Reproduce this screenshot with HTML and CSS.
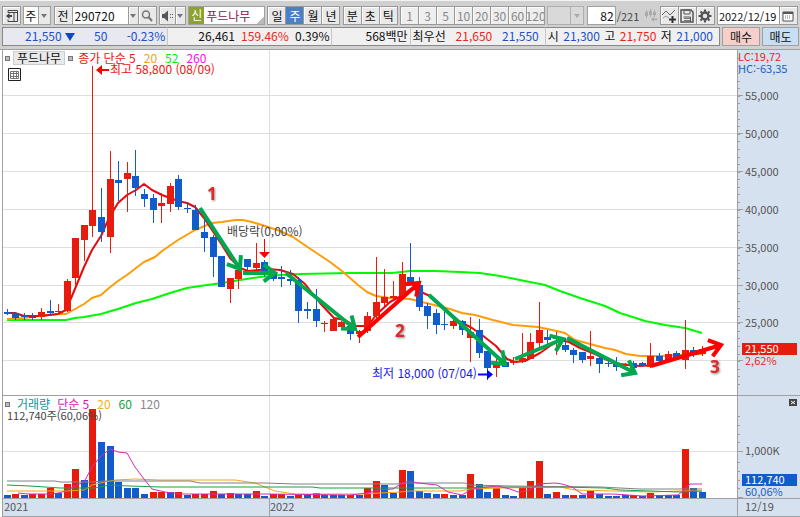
FILE: index.html
```html
<!DOCTYPE html>
<html lang="ko">

<head>
	<meta charset="utf-8">
	<title>푸드나무 주봉 차트</title>
	<meta name="viewport" content="width=device-width, initial-scale=1">
	<link rel="stylesheet" href="styles.css">
</head>

<body>
	<header class="toolbar">
		<button class="btn" aria-label="패널">
			<svg width="14" height="14" viewBox="0 0 14 14"><path d="M3 3.500V1.500h9.500v11H3V10.500M3 3.500h9.500M9 3.500v9" fill="none" stroke="#444" /><path d="M1 7l3.500-3v2H7v2H4.500v2z" fill="#444" /></svg>
		</button>
		<div class="drop drop--period">
			<select aria-label="주기"><option>주</option></select>
			<span class="arrow"></span>
		</div>
		<div class="group">
			<button class="btn">전</button>
			<input class="field field--code" aria-label="종목코드" value="290720">
			<button class="btn btn--thin" aria-label="종목 목록"><span class="caret"></span></button>
			<button class="btn" aria-label="검색">
				<svg width="14" height="14" viewBox="0 0 14 14"><circle cx="6" cy="5.500" r="3.500" fill="none" stroke="#777" stroke-width="1.500" /><path d="M8.500 8l3.500 4" stroke="#777" stroke-width="2" /></svg>
			</button>
		</div>
		<div class="group">
			<button class="btn btn--sound" aria-label="소리">
				<svg width="13" height="12" viewBox="0 0 13 12"><path d="M1 4h2l4-3.500v11L3 8H1z" fill="#555" /><path d="M9 4h1v1H9zM9 7h1v1H9zM11 4h1v1h-1zM11 7h1v1h-1z" fill="#555" /></svg>
			</button>
			<button class="btn btn--thin" aria-label="소리 설정"><span class="caret"></span></button>
		</div>
		<div class="name">
			<span class="name__badge">신</span>
			<input class="name__field" aria-label="종목명" value="푸드나무">
		</div>
		<div class="group">
			<button class="btn">일</button>
			<button class="btn is-active">주</button>
			<button class="btn">월</button>
			<button class="btn">년</button>
		</div>
		<div class="group">
			<button class="btn">분</button>
			<button class="btn">초</button>
			<button class="btn">틱</button>
		</div>
		<div class="group group--off">
			<button class="btn">1</button>
			<button class="btn">3</button>
			<button class="btn">5</button>
			<button class="btn">10</button>
			<button class="btn">20</button>
			<button class="btn">30</button>
			<button class="btn">60</button>
			<button class="btn">120</button>
		</div>
		<div class="drop drop--off">
			<select aria-label="분 단위" disabled><option></option></select>
			<span class="arrow"></span>
		</div>
		<label class="count"><input class="field field--count" aria-label="봉 개수" value="82">/221</label>
		<div class="group group--tools">
			<button class="btn btn--flat" aria-label="봉 추가">
				<svg width="14" height="14" viewBox="0 0 14 14"><path d="M2.500 1v8M6.500 0v8M10.500 1v7" stroke="#aaa" /><path d="M1 3h3v4H1zM5 2h3v4H5zM9 3h3v3H9zM7 10l3-2v1.500h3v1.500h-3V13z" fill="#aaa" /></svg>
			</button>
			<button class="btn" aria-label="지표 추가">
				<svg width="14" height="14" viewBox="0 0 14 14"><path d="M0 6l4-4 4 4 5-5" fill="none" stroke="#666" /><path d="M1 9l3-2 3 2" fill="none" stroke="#999" /><path d="M10.500 7v7M7 10.500h7" stroke="#333" stroke-width="2" /></svg>
			</button>
			<button class="btn" aria-label="저장">
				<svg width="14" height="14" viewBox="0 0 14 14"><path d="M1 1h10l2 2v10H1z" fill="none" stroke="#555" stroke-width="1.500" /><path d="M4 1h6v4H4zM3.500 8h7v5" fill="none" stroke="#555" /><path d="M4 9.500h6M4 11.500h6" stroke="#777" /></svg>
			</button>
			<button class="btn" aria-label="설정">
				<svg width="14" height="14" viewBox="0 0 14 14"><circle cx="7" cy="7" r="3.500" fill="none" stroke="#555" stroke-width="2.500" /><path d="M7 .5v2.500M7 11v2.500M.5 7H3M11 7h2.500M2.500 2.500L4 4M10 10l1.500 1.500M11.500 2.500L10 4M4 10l-1.500 1.500" stroke="#555" stroke-width="2" /></svg>
			</button>
		</div>
		<div class="group">
			<input class="field field--date" aria-label="날짜" value="2022/12/19">
			<button class="btn" aria-label="달력">
				<svg width="12" height="12" viewBox="0 0 12 12"><path d="M1 2h10v9H1z" fill="#fff" stroke="#555" /><path d="M1 3h10" stroke="#555" stroke-width="2" /><path d="M3 6h1m1 0h1m1 0h1M3 8h1m1 0h1m1 0h1" stroke="#777" /></svg>
			</button>
		</div>
	</header>

	<section class="quote">
		<div class="cell cell--price blue"><b>21,550<i class="down"></i></b><b>50</b><b>-0.23%</b></div>
		<div class="cell cell--vol"><b>26,461</b><b class="red">159.46%</b><b>0.39%</b></div>
		<div class="cell cell--amount"><b>568백만</b></div>
		<div class="cell cell--best"><b>최우선</b><b class="red">21,650</b><b class="blue">21,550</b></div>
		<div class="cell cell--range"><b>시</b><b class="blue">21,300</b><b>고</b><b class="red">21,750</b><b>저</b><b class="blue">21,000</b></div>
		<button class="trade trade--buy">매수</button>
		<button class="trade trade--sell">매도</button>
	</section>

	<main class="chart">
		<svg class="chart__svg" viewBox="0 0 800 468">
			<rect class="axis-bg" x="738" y="0" width="62" height="468" />
			<rect class="axis-bg" x="2" y="450" width="736" height="18" />
			<g id="grid"></g>
			<g id="volume"></g>
			<g id="price"></g>
			<g id="marks"></g>
			<g class="frame">
				<path d="M0 .5H800M2.500 0V468M737.500 0V468M2 346.500H800M2 449.500H800M2 467.500H800M269.500 450V467" />
			</g>
			<g class="axis-text">
				<text class="red" x="738" y="12">LC:19,72</text>
				<text class="blue" x="738" y="24">HC:-63,35</text>
				<text x="4" y="462">2021</text>
				<text x="270" y="462">2022</text>
				<text x="745" y="462">12/19</text>
				<text x="745" y="406">1,000K</text>
				<rect class="tag-red" x="742" y="294" width="55" height="12" />
				<text class="white" x="745" y="304">21,550</text>
				<text class="red" x="745" y="316">2,62%</text>
				<rect class="tag-blue" x="742" y="425" width="55" height="12" />
				<text class="white" x="745" y="435">112,740</text>
				<text class="blue" x="745" y="447">60,06%</text>
			</g>
			<path d="M789 350h8v7h-8z" fill="#444" />
			<path d="M791 352l4 3m0-3l-4 3" stroke="#fff" />
		</svg>

		<div class="legend">
			<i class="dot"></i><button class="legend__name">푸드나무</button><i class="dot"></i>
			<span class="legend__ma"><span class="ma-red">종가 단순 5</span><span class="ma-orange">20</span><span class="ma-green">52</span><span class="ma-pink">260</span></span>
		</div>
		<button class="table-btn" aria-label="표">
			<svg width="13" height="13" viewBox="0 0 13 13"><path d="M.5 .5h12v12H.5z" fill="#fff" stroke="#222" /><path d="M2.500 3.500h8v7h-8zM2.500 5.500h8M2.500 8.500h8M5.500 3.500v7M8.500 3.500v7" fill="none" stroke="#777" /></svg>
		</button>
		<div class="legend legend--volume">
			<i class="dot"></i><span class="teal">거래량</span>
			<span class="legend__ma"><span class="vol-pink">단순 5</span><span class="vol-gold">20</span><span class="vol-green">60</span><span class="vol-gray">120</span></span>
		</div>
	</main>

	<script src="chart.js"></script>
</body>

</html>
```
FILE: styles.css
```css
* {
	box-sizing: border-box;
}

body {
	margin: 0;
	background-color: #d0d0d0;
	font-family: "Noto Sans CJK KR", sans-serif;
	font-size: 12px;
	line-height: 16px;
	color: #111;
	overflow: hidden;
}

button,
input,
select {
	margin: 0;
	padding: 0;
	border: 1px solid #a0a0a0;
	border-radius: 0;
	background-color: #e9e9e9;
	font: inherit;
	color: inherit;
}

svg {
	display: block;
}

.toolbar {
	display: flex;
	justify-content: space-between;
	height: 27px;
	padding: 5px 2px 3px;
	border-top: 1px solid #f4f4f4;
}

.group,
.name,
.count {
	display: flex;
}

.btn {
	display: flex;
	align-items: center;
	justify-content: center;
	width: 19px;
	height: 19px;
	border-color: #999;
	box-shadow: inset 1px 1px 0 #fafafa;
}

.group > * + * {
	margin-left: -1px;
}

.btn--thin {
	width: 11px;
}

.btn--sound {
	width: 17px;
}

.btn.is-active {
	background-color: #4a80c8;
	box-shadow: none;
	color: #fff;
}

.group--off .btn {
	background-color: #eee;
	color: #888;
	overflow: hidden;
}

.btn--flat {
	border-color: transparent;
	background-color: transparent;
	box-shadow: none;
}

.caret,
.arrow {
	width: 0;
	border: 3px solid transparent;
	border-top: 4px solid #777;
	border-bottom: 0;
}

.drop {
	position: relative;
	height: 19px;
}

.drop select {
	appearance: none;
	width: 28px;
	height: 19px;
	padding-left: 1px;
	background: linear-gradient(90deg, #fff 14px, #a0a0a0 14px, #a0a0a0 15px, #e9e9e9 15px);
}

.drop .arrow {
	position: absolute;
	top: 8px;
	right: 4px;
	pointer-events: none;
}

.drop--off select {
	width: 37px;
	background: linear-gradient(90deg, #ddd 22px, #a0a0a0 22px, #a0a0a0 23px, #ddd 23px);
}

.drop--off .arrow {
	border-top-color: #aaa;
}

.field {
	height: 19px;
	padding-left: 2px;
	background-color: #fff;
}

.field--code {
	width: 57px;
}

.field--count {
	width: 29px;
	margin-right: 1px;
	padding-right: 1px;
	font-size: 12px;
	color: #111;
	text-align: right;
}

.field--date {
	width: 63px;
	padding-left: 1px;
	font-size: 11px;
}

.count {
	align-items: center;
	height: 19px;
	font-size: 11px;
	color: #444;
}

.name {
	height: 19px;
	border: 1px solid #a0a0a0;
	background: linear-gradient(135deg, #fff 92%, #bbb 92%);
}

.name__badge {
	width: 15px;
	background-color: #8ca22c;
	color: #fff;
	text-align: center;
}

.name__field {
	width: 60px;
	padding-left: 2px;
	border: 0;
	background-color: transparent;
	color: #8a1450;
}

.quote {
	display: grid;
	grid-template-columns: 165fr 164fr 78fr 135fr 175fr 40px 39px;
	height: 19px;
	margin: 0 1px 3px 2px;
}

.cell {
	display: flex;
	justify-content: space-between;
	min-width: 0;
	padding: 0 2px;
	border: 1px solid #888;
	border-width: 1px 0;
	background-color: #f0f0f0;
	white-space: nowrap;
}

.cell + .cell {
	border-left: 1px solid #c8c8c8;
}

.cell b {
	font-weight: normal;
}

.cell--price {
	padding-left: 22px;
	border-left: 1px solid #888;
	background-color: #e8e8f0;
}

.cell--vol {
	padding-left: 30px;
}

.cell--amount {
	justify-content: flex-end;
}

.cell--best {
	padding-right: 6px;
}

.cell .cell--range,
.cell--range {
	padding-right: 6px;
	border-right: 1px solid #888;
}

.down {
	display: inline-block;
	margin-left: 3px;
	border: 5px solid transparent;
	border-top: 8px solid #1048c0;
	border-bottom: 0;
}

.trade {
	margin-left: 2px;
}

.trade--buy {
	background-color: #f6cfcb;
}

.trade--sell {
	background-color: #c8def4;
}

.blue {
	color: #1c50c8;
	fill: #1c60c8;
}

.red {
	color: #e82818;
	fill: #e82818;
}

.chart {
	position: relative;
	background-color: #fff;
}

.chart__svg {
	width: 100%;
	height: auto;
}

.axis-bg {
	fill: #d6e1ef;
}

.frame path,
.ticks {
	fill: none;
	stroke: #a0a0a0;
}

.grid-line {
	stroke: #dedede;
}

.axis-text {
	font-size: 11px;
	fill: #555;
}

.axis-text .red {
	fill: #e82818;
}

.axis-text .blue {
	fill: #1c60c8;
}

.axis-text .white {
	fill: #fff;
}

.tag-red,
.up {
	fill: #e81c0c;
}

.tag-blue,
.fall {
	fill: #105ccc;
}

.wick-up {
	stroke: #e81c0c;
}

.wick-fall {
	stroke: #105ccc;
}

.line {
	fill: none;
	stroke-width: 2;
	stroke-linejoin: round;
}

.line--thin {
	stroke-width: 1;
}

.arrow-line {
	fill: none;
	stroke-width: 4;
}

.note {
	font-size: 12px;
}

.note--dark {
	fill: #444;
}

.note--small {
	font-size: 11px;
}

.wave {
	font-family: "Noto Sans", sans-serif;
	font-size: 17px;
	font-weight: bold;
	fill: #e02828;
	filter: drop-shadow(1px 1px 1px #888);
}

.legend {
	position: absolute;
	top: 1px;
	left: 5px;
	display: flex;
	align-items: center;
	gap: 3px;
}

.legend--volume {
	top: 347px;
	gap: 7px;
}

.legend__name {
	height: 14px;
	padding: 0 3px;
	border-color: #ccc;
	line-height: 12px;
}

.legend__ma {
	display: flex;
	gap: 8px;
	margin-left: 2px;
}

.legend--volume .legend__ma {
	margin-left: 0;
}

.dot {
	width: 5px;
	height: 5px;
	border: 1px solid #777;
	background-color: #bbb;
}

.table-btn {
	position: absolute;
	top: 19px;
	left: 8px;
	border: 0;
}

.ma-red {
	color: #f01010;
}

.ma-orange {
	color: #f8a020;
}

.ma-green {
	color: #08e808;
}

.ma-pink {
	color: #f810f8;
}

.teal {
	color: #209098;
}

.vol-pink {
	color: #d818b0;
}

.vol-gold {
	color: #f0b020;
}

.vol-green {
	color: #18a040;
}

.vol-gray {
	color: #888;
}
```
FILE: chart.js
```javascript
var NS = 'http://www.w3.org/2000/svg'
var TOP = 49 // values below are measured from the window top
var FIRST = 6.6
var STEP = 8.585

// colour, high, body top, body bottom, low
var candles = [
	['b', 309, 312, 314, 315], ['b', 312, 313, 318, 320], ['b', 313, 316, 317, 320], ['b', 313, 317, 318, 320],
	['r', 308, 312, 317, 320], ['b', 300, 311, 313, 316], ['r', 304, 311, 312, 315], ['r', 279, 281, 311, 312],
	['r', 238, 238, 278, 285], ['r', 225, 225, 240, 261], ['r', 66, 210, 226, 237], ['b', 188, 217, 232, 242],
	['r', 151, 179, 237, 253], ['b', 161, 180, 183, 201], ['r', 162, 173, 179, 212], ['b', 150, 176, 188, 196],
	['b', 189, 194, 199, 207], ['b', 194, 198, 210, 223], ['r', 193, 203, 206, 223], ['r', 183, 186, 204, 212],
	['b', 175, 179, 207, 210], ['b', 202, 208, 209, 213], ['b', 205, 210, 230, 230], ['b', 218, 232, 238, 252],
	['b', 235, 237, 257, 277], ['b', 256, 256, 287, 287], ['r', 278, 278, 289, 303], ['r', 268, 270, 279, 289],
	['b', 259, 259, 267, 270], ['r', 243, 263, 268, 270], ['b', 260, 262, 271, 277], ['b', 271, 273, 279, 281],
	['b', 266, 277, 279, 287], ['b', 270, 279, 281, 285], ['b', 277, 280, 311, 323], ['b', 302, 309, 311, 319],
	['b', 289, 309, 321, 327], ['r', 321, 323, 324, 332], ['r', 316, 319, 331, 331], ['r', 321, 322, 327, 327],
	['b', 323, 326, 334, 340], ['r', 330, 331, 334, 343], ['r', 312, 316, 331, 333], ['r', 257, 302, 316, 318],
	['r', 269, 297, 303, 306], ['r', 281, 296, 298, 300], ['r', 262, 274, 296, 297], ['b', 243, 277, 283, 285],
	['b', 277, 285, 307, 311], ['b', 303, 306, 316, 329], ['b', 309, 313, 325, 334], ['b', 311, 324, 325, 330],
	['r', 315, 321, 326, 329], ['b', 320, 321, 330, 335], ['r', 317, 332, 338, 362], ['b', 319, 330, 353, 358],
	['b', 351, 351, 368, 380], ['r', 359, 362, 368, 377], ['b', 360, 362, 367, 367], ['r', 357, 361, 363, 365],
	['r', 333, 358, 362, 363], ['r', 333, 342, 359, 359], ['r', 302, 330, 343, 347], ['b', 330, 337, 340, 345],
	['r', 332, 337, 339, 355], ['b', 338, 345, 350, 352], ['b', 348, 350, 355, 363], ['b', 352, 352, 360, 363],
	['r', 331, 356, 359, 366], ['b', 355, 358, 364, 373], ['b', 360, 363, 364, 367], ['b', 357, 363, 367, 371],
	['r', 363, 364, 366, 368], ['b', 361, 363, 368, 369], ['b', 362, 363, 366, 367], ['r', 343, 356, 367, 368],
	['b', 353, 356, 361, 363], ['r', 351, 354, 360, 361], ['b', 351, 353, 358, 360], ['r', 320, 350, 360, 369],
	['b', 347, 350, 355, 357], ['r', 346, 349, 354, 356]
]

var volumes = ('b3 r4 b3 r4 r4 r10 b5 r14 r29 b18 r89 b56 b52 b16 b10 b10 b4 r6 r6 b6 r6 b3 r4 r4 r7 b4 r5 b4 b4 r7 b2 ' +
	'r4 r4 b2 r3 b3 r5 b3 b3 b3 r3 b3 r10 r17 b13 b5 r28 b27 b7 b5 b4 r4 b3 b3 r24 b14 b6 r10 b3 b2 r10 r17 r37 b4 r6 b3 r3 b3 r7 b4 b2 b2 b3 r3 b2 r5 b3 b3 b3 r49 b10 b6').split(' ')

var priceLines = [
	['#00f800', '7,320 66,320 75,318 84,317 101,314 118,309 136,303 152,299 170,293 187,288 200,286 222,283 240,280 260,277 280,275 300,274 350,273 392,273 410,271 435,271 460,272 480,273 500,276 515,279 530,282 545,285 560,291 580,298 605,306 620,313 645,321 665,325 685,328 702,333'],
	['#ff9c08', '7,319 24,318 40,316 58,314 66,314 75,309 84,304 92,298 101,295 109,288 118,281 127,275 136,268 144,262 155,257 162,251 178,240 195,230 212,223 222,222 235,220 243,220 252,222 265,226 280,231 293,237 306,246 318,254 330,262 342,271 350,278 358,285 367,292 376,296 390,298 410,299 430,304 450,309 462,313 475,315 493,320 513,325 538,327 552,330 565,333 575,340 590,344 605,348 615,350 626,354 640,356 660,356 702,354'],
	['#e8080c', '7,313 15,313 24,316 40,316 58,314 66,310 72,296 84,267 92,250 101,236 109,218 118,203 127,195 136,190 144,184 152,190 162,195 170,198 178,201 187,203 195,207 204,218 222,245 230,258 240,268 248,271 268,269 280,270 293,274 305,284 320,303 334,318 345,320 355,326 368,326 376,315 390,302 401,296 412,288 421,292 430,296 440,305 455,319 472,328 482,335 496,346 507,359 515,362 525,361 540,353 550,346 560,340 569,342 580,348 595,354 607,360 620,364 640,366 655,365 672,360 690,355 706,352']
]

var volumeLines = [
	['#f0a810', '7,491 66,491 84,490 92,485 105,482 115,480 135,479 160,480 235,480 255,483 265,487 275,491 295,494 360,494 400,492 410,491 460,491 470,489 500,488 560,487 575,490 650,492 680,491 702,491'],
	['#18a040', '7,485 30,486 60,488 95,488 110,485 130,486 160,487 312,487 320,488 470,488 480,487 560,487 605,488 620,490 680,492 702,491'],
	['#808080', '7,481 55,481 60,482 90,482 105,481 190,481 200,483 265,483 295,484 395,484 410,483 465,483 470,485 510,486 600,487 640,489 702,489'],
	['#d828b8', '18,493 28,494 50,494 58,493 66,491 75,486 84,482 92,467 101,456 110,449 118,452 127,453 135,467 144,479 152,489 165,492 180,494 265,494 350,495 368,493 378,490 393,489 402,483 410,481 418,483 437,485 448,492 462,495 470,490 478,488 498,486 510,489 518,492 528,491 538,484 555,483 562,484 572,487 582,494 613,494 643,496 678,495 683,491 690,484 702,484']
]

// colour, from x, from y, to x, to y
var arrows = [
	['#00a850', 200, 208, 240, 269], ['#00a850', 243, 273, 275, 273], ['#00a850', 286, 273, 355, 329],
	['#00a850', 429, 295, 505, 364], ['#00a850', 515, 359, 563, 339], ['#00a850', 567, 338, 635, 373],
	['#ff0000', 358, 337, 419, 283], ['#ff0000', 651, 366, 721, 345]
]

function add(parent, name, attrs, text) {
	var el = document.createElementNS(NS, name)
	for (var key in attrs) el.setAttribute(key, attrs[key])
	if (text) el.textContent = text
	document.getElementById(parent).appendChild(el)
}

function drawGrid() {
	var i, y
	for (i = 0; i < 8; i++) {
		y = Math.round(96 + i * 37.9) - TOP - 0.5
		add('grid', 'path', { class: 'grid-line', d: 'M3 ' + y + 'H737' })
		add('grid', 'path', { class: 'ticks', d: 'M738 ' + y + 'h5' })
		if (i < 7) add('grid', 'text', { class: 'axis-text', x: 745, y: y + 4 }, (55 - i * 5) + ',000')
	}
	add('grid', 'path', { class: 'grid-line', d: 'M3 402.500H737M269.500 1V450' })
	for (i = 0; i < 44; i++) {
		y = Math.round(58 + i * 7.58) - TOP + 0.5
		add('grid', 'path', { class: 'ticks', d: 'M738 ' + y + 'h2' })
	}
	[416, 425, 434, 442, 462, 471, 480, 488].forEach(function (t) {
		add('grid', 'path', { class: 'ticks', d: 'M738 ' + (t - TOP + 0.5) + 'h2' })
	})
	add('grid', 'path', { class: 'ticks', d: 'M738 402.500h5M738 448.500h5' })
}

function drawLines(parent, lines, cls) {
	lines.forEach(function (line) {
		add(parent, 'polyline', { class: cls, stroke: line[0], points: line[1], transform: 'translate(0 ' + -TOP + ')' })
	})
}

function drawCandles() {
	candles.forEach(function (c, i) {
		var x = Math.round(FIRST + i * STEP)
		var up = c[0] === 'r'
		add('price', 'path', { class: up ? 'wick-up' : 'wick-fall', d: 'M' + (x + 0.5) + ' ' + (c[1] - TOP) + 'V' + (c[4] - TOP) })
		add('price', 'rect', { class: up ? 'up' : 'fall', x: x - 3, y: c[2] - TOP, width: 7, height: Math.max(1, c[3] - c[2]) })
	})
}

function drawVolumes() {
	volumes.forEach(function (v, i) {
		var x = Math.round(FIRST + i * STEP)
		var h = +v.slice(1)
		add('volume', 'rect', { class: v[0] === 'r' ? 'up' : 'fall', x: x - 3, y: 449 - h, width: 7, height: h })
	})
}

function drawArrow(a) {
	var angle = Math.atan2(a[4] - a[2], a[3] - a[1])
	var d = 'M' + a[1] + ' ' + (a[2] - TOP) + 'L' + a[3] + ' ' + (a[4] - TOP)
	var wings = [angle + 2.5, angle - 2.5].map(function (w) {
		return (a[3] + Math.cos(w) * 14) + ' ' + (a[4] - TOP + Math.sin(w) * 14)
	})
	d += 'M' + wings[0] + 'L' + a[3] + ' ' + (a[4] - TOP) + 'L' + wings[1]
	add('marks', 'path', { class: 'arrow-line', stroke: a[0], d: d })
}

function drawNotes() {
	add('marks', 'text', { class: 'note', x: 110, y: 25, fill: '#f01010' }, '최고 58,800 (08/09)')
	add('marks', 'path', { d: 'M96 21l6-5v4h7v2h-7v4z', fill: '#f00' })
	add('marks', 'text', { class: 'note', x: 372, y: 329, fill: '#1818e8' }, '최저 18,000 (07/04)')
	add('marks', 'path', { d: 'M493 325.500l-6-5v4h-9v2h9v4z', fill: '#00f' })
	add('marks', 'text', { class: 'note note--dark', x: 227, y: 187 }, '배당락(0,00%)')
	add('marks', 'path', { d: 'M264 190h1v13h5l-5.500 6-5.500-6h5z', fill: '#f00' })
	add('marks', 'text', { class: 'note note--dark note--small', x: 7, y: 371 }, '112,740주(60,06%)')
	add('marks', 'text', { class: 'wave', x: 207, y: 151 }, '1')
	add('marks', 'text', { class: 'wave', x: 395, y: 288 }, '2')
	add('marks', 'text', { class: 'wave', x: 710, y: 324 }, '3')
}

drawGrid()
drawVolumes()
drawLines('volume', volumeLines, 'line line--thin')
drawLines('price', priceLines, 'line')
drawCandles()
arrows.forEach(drawArrow)
drawNotes()
```
